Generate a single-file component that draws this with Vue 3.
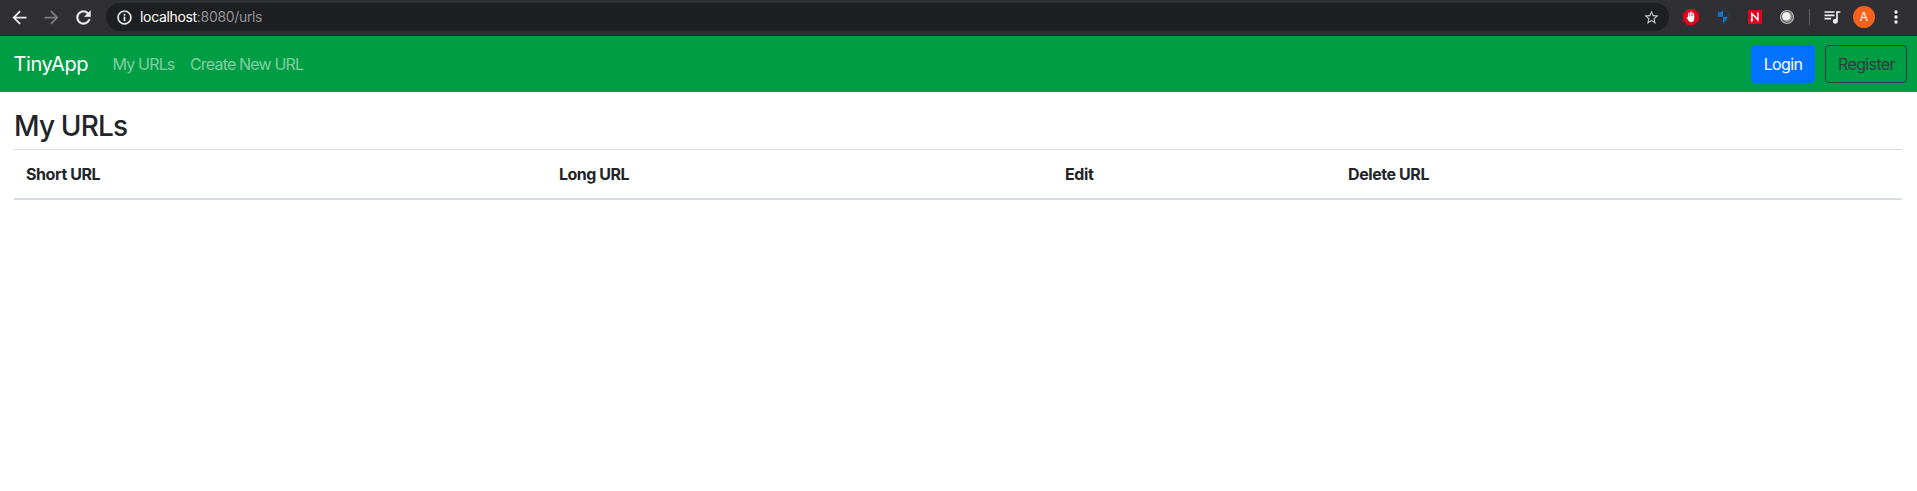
<script setup>
const columns = [
  { label: 'Short URL', key: 'short' },
  { label: 'Long URL', key: 'long' },
  { label: 'Edit', key: 'edit' },
  { label: 'Delete URL', key: 'delete' },
]
</script>

<template>
  <div class="window">
    <header class="chrome">
      <div class="slot">
        <svg width="21" height="21" viewBox="0 0 24 24" fill="#f1f1f2"><path d="M20 11H7.83l5.59-5.59L12 4l-8 8 8 8 1.41-1.41L7.83 13H20v-2z" /></svg>
      </div>
      <div class="slot">
        <svg width="21" height="21" viewBox="0 0 24 24" fill="#7d7d80"><path d="M12 4l-1.41 1.41L16.17 11H4v2h12.17l-5.58 5.59L12 20l8-8z" /></svg>
      </div>
      <div class="slot">
        <svg width="21" height="21" viewBox="0 0 24 24" fill="#f1f1f2" stroke="#f1f1f2" stroke-width=".4"><path d="M17.65 6.35C16.2 4.9 14.21 4 12 4c-4.42 0-7.99 3.58-7.99 8s3.57 8 7.99 8c3.73 0 6.84-2.55 7.73-6h-2.08c-.82 2.33-3.04 4-5.65 4-3.31 0-6-2.69-6-6s2.69-6 6-6c1.66 0 3.14.69 4.22 1.78L13 11h7V4l-2.35 2.35z" /></svg>
      </div>
      <div class="address">
        <svg class="info" width="17" height="17" viewBox="0 0 24 24" fill="#f1f1f2"><path d="M11 7h2v2h-2zm0 4h2v6h-2zm1-9C6.48 2 2 6.48 2 12s4.48 10 10 10 10-4.48 10-10S17.520 2 12 2zm0 18c-4.410 0-8-3.590-8-8s3.590-8 8-8 8 3.590 8 8-3.590 8-8 8z" stroke="#f1f1f2" stroke-width=".4" /></svg>
        <span class="url"><b>localhost</b>:8080/urls</span>
        <svg class="star" width="17" height="17" viewBox="0 0 24 24" fill="#c3c4c6"><path d="M22 9.240l-7.190-.62L12 2 9.190 8.630 2 9.240l5.460 4.730L5.820 21 12 17.270 18.180 21l-1.630-7.030L22 9.240zM12 15.400l-3.760 2.270 1-4.280-3.320-2.880 4.380-.38L12 6.100l1.710 4.040 4.380.38-3.320 2.880 1 4.280L12 15.400z" /></svg>
      </div>
      <div class="slot">
        <svg width="16" height="16" viewBox="0 0 16 16">
          <path d="M4.700 0h6.600L16 4.700v6.600L11.300 16H4.700L0 11.300V4.700z" fill="#e2001a" />
          <path d="M5.500 8V4.500M7.200 8V3.200M8.900 8V3.200M10.600 9V4.500" stroke="#fff" stroke-width="1.200" stroke-linecap="round" />
          <path d="M4.900 7.300h6.300v2.500c0 2-1 3.400-2.900 3.400-1.600 0-2.400-.7-3-1.900L3.500 8.700c.4-.6 1-.5 1.400.1z" fill="#fff" />
        </svg>
      </div>
      <div class="slot">
        <svg width="14" height="16" viewBox="0 0 14 16">
          <path d="M7 .8c2 1.300 3.600 1.700 5.800 1.700 0 6-.8 9.800-5.800 12.500C2 12.300 1.200 8.500 1.200 2.500 3.400 2.500 5 2.100 7 .8z" fill="#2b3138" stroke="#29424c" stroke-width=".8" />
          <path d="M7 2v5.800H2.400C2.100 6.500 1.900 5 2 3.300c1.900 0 3.500-.4 5-1.300zM7 7.800h4.600c-.6 2.600-1.900 4.700-4.600 6.200z" fill="#1976c5" />
        </svg>
      </div>
      <div class="slot">
        <svg width="14" height="14" viewBox="0 0 14 14">
          <path d="M0 0h14v14H0z" fill="#e2001a" />
          <path d="M3.900 11.500V3.600l6 6.200V2.500" fill="none" stroke="#fff" stroke-width="1.500" />
          <path d="M2.300 9.500h3L3.900 12z" fill="#fff" />
        </svg>
      </div>
      <div class="slot">
        <svg width="16" height="16" viewBox="0 0 16 16">
          <circle cx="8" cy="8" r="6.500" fill="#5e5f5d" stroke="#b5b5b5" stroke-width="1.200" />
          <circle cx="8" cy="8" r="5" fill="#999" />
          <circle cx="7.300" cy="7.300" r="4" fill="#efefef" />
        </svg>
      </div>
      <div class="slot divider-slot"><i class="divider"></i></div>
      <div class="slot narrow">
        <svg width="20" height="20" viewBox="0 0 24 24" fill="#f1f1f2"><path d="M15 5H3v2h12V5zm0 4H3v2h12V9zM3 15h8v-2H3v2zM17 5v9.180c-.31-.11-.65-.18-1-.18-1.660 0-3 1.340-3 3s1.340 3 3 3 3-1.340 3-3V7h3V5h-5z" /></svg>
      </div>
      <div class="slot"><span class="avatar">A</span></div>
      <div class="slot">
        <svg width="20" height="20" viewBox="0 0 24 24" fill="#f1f1f2"><circle cx="12" cy="6" r="2" /><circle cx="12" cy="12" r="2" /><circle cx="12" cy="18" r="2" /></svg>
      </div>
    </header>

    <nav class="navbar">
      <a class="brand">TinyApp</a>
      <a class="link urls">My URLs</a>
      <a class="link create">Create New URL</a>
      <div class="actions">
        <button class="btn login">Login</button>
        <button class="btn register">Register</button>
      </div>
    </nav>

    <main>
      <h3>My URLs</h3>
      <div class="table-head">
        <div v-for="c in columns" :key="c.key" :class="['cell', c.key]">
          <span>{{ c.label }}</span>
        </div>
      </div>
    </main>
  </div>
</template>

<style>
body {
  background: #fff;
}
</style>

<style scoped>
.window {
  width: 1917px;
  height: 491px;
  overflow: hidden;
  background: #fff;
  color: #212529;
  font-family: Inter, "Liberation Sans", sans-serif;
  font-size: 16px;
  line-height: 24px;
  white-space: nowrap;
}
.chrome {
  box-sizing: border-box;
  height: 36px;
  padding: 0 5px 1px 3.5px;
  display: flex;
  align-items: center;
  background: #303034;
  border-bottom: 1px solid #202a28;
}
.slot {
  width: 32px;
  height: 34px;
  flex: none;
  display: flex;
  align-items: center;
  justify-content: center;
}
.address {
  box-sizing: border-box;
  flex: 1;
  height: 28px;
  margin: 0 6px 0 6.5px;
  padding: 0 9.5px;
  border-radius: 14px;
  background: #1e1f21;
  display: flex;
  align-items: center;
}
.url {
  margin-left: 7.5px;
  font-size: 14px;
  letter-spacing: -0.33px;
  color: #929395;
}
.url b {
  font-weight: 400;
  color: #fff;
}
.star {
  margin-left: auto;
}
.divider-slot {
  width: 13px;
}
.divider {
  width: 1px;
  height: 16px;
  background: #606064;
}
.avatar {
  width: 22px;
  height: 22px;
  border-radius: 50%;
  background: #f8621c;
  color: #fff;
  font-size: 12px;
  line-height: 22px;
  text-align: center;
}
.navbar {
  box-sizing: border-box;
  height: 56px;
  padding: 0 10px 0 13.5px;
  display: flex;
  align-items: center;
  background: #009e44;
}
.brand {
  width: 99px;
  color: #fff;
  font-size: 20px;
  letter-spacing: -0.4px;
}
.link {
  color: #80cea1;
  letter-spacing: -0.82px;
}
.link.urls {
  width: 77.5px;
}
.actions {
  margin-left: auto;
  display: flex;
  gap: 10px;
}
.btn {
  box-sizing: border-box;
  height: 38px;
  padding: 0;
  border: 1px solid #007bff;
  border-radius: 4px;
  font: inherit;
  letter-spacing: -0.65px;
}
.login {
  width: 64px;
  background: #0072ff;
  border-color: #0072ff;
  color: #fff;
}
.register {
  width: 82px;
  padding-left: 1px;
  background: transparent;
  border-color: #343a40;
  color: #343a40;
}
main {
  padding: 16px 15px 0 14px;
}
h3 {
  margin: 0 0 5px;
  font-size: 28px;
  font-weight: 500;
  line-height: 36px;
  letter-spacing: -0.85px;
}
.table-head {
  box-sizing: border-box;
  height: 51px;
  border-top: 1px solid #d9dbdd;
  border-bottom: 2px solid #d9dee3;
  display: grid;
  grid-template-columns: 533px 506px 283px 1fr;
}
.cell {
  padding: 12px;
  font-weight: 700;
  letter-spacing: -0.42px;
}
.cell.long {
  letter-spacing: -0.5px;
}
</style>
